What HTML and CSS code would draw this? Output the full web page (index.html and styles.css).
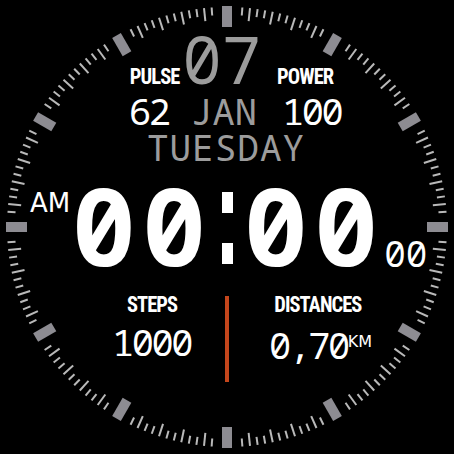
FILE: index.html
```html
<!DOCTYPE html>
<html lang="en">
<head>
<meta charset="utf-8">
<title>Watch face</title>
<link rel="stylesheet" href="styles.css">
</head>
<body>
<div class="watch">
  <svg class="dial" width="454" height="454" viewBox="0 0 454 454" aria-hidden="true">
    <defs>
      <g id="seg">
        <rect class="hour" x="222" y="6" width="10" height="21"/>
        <line class="tick" x1="227" y1="7" x2="227" y2="15" transform="rotate(4 227 227)"/>
        <line class="tick" x1="227" y1="7" x2="227" y2="20" transform="rotate(6 227 227)"/>
        <line class="tick" x1="227" y1="7" x2="227" y2="15" transform="rotate(8 227 227)"/>
        <line class="tick" x1="227" y1="7" x2="227" y2="15" transform="rotate(10 227 227)"/>
        <line class="tick" x1="227" y1="7" x2="227" y2="20" transform="rotate(12 227 227)"/>
        <line class="tick" x1="227" y1="7" x2="227" y2="15" transform="rotate(14 227 227)"/>
        <line class="tick" x1="227" y1="7" x2="227" y2="15" transform="rotate(16 227 227)"/>
        <line class="tick" x1="227" y1="7" x2="227" y2="20" transform="rotate(18 227 227)"/>
        <line class="tick" x1="227" y1="7" x2="227" y2="15" transform="rotate(20 227 227)"/>
        <line class="tick" x1="227" y1="7" x2="227" y2="15" transform="rotate(22 227 227)"/>
        <line class="tick" x1="227" y1="7" x2="227" y2="20" transform="rotate(24 227 227)"/>
        <line class="tick" x1="227" y1="7" x2="227" y2="15" transform="rotate(26 227 227)"/>
      </g>
    </defs>
    <use href="#seg"/>
    <use href="#seg" transform="rotate(30 227 227)"/>
    <use href="#seg" transform="rotate(60 227 227)"/>
    <use href="#seg" transform="rotate(90 227 227)"/>
    <use href="#seg" transform="rotate(120 227 227)"/>
    <use href="#seg" transform="rotate(150 227 227)"/>
    <use href="#seg" transform="rotate(180 227 227)"/>
    <use href="#seg" transform="rotate(210 227 227)"/>
    <use href="#seg" transform="rotate(240 227 227)"/>
    <use href="#seg" transform="rotate(270 227 227)"/>
    <use href="#seg" transform="rotate(300 227 227)"/>
    <use href="#seg" transform="rotate(330 227 227)"/>
  </svg>

  <div class="face">
    <div class="row row-day">
      <span class="label">PULSE</span>
      <span class="day">07</span>
      <span class="label">POWER</span>
    </div>
    <div class="row row-month">
      <span class="value">62</span>
      <span class="month">JAN</span>
      <span class="value">100</span>
    </div>
    <div class="weekday">TUESDAY</div>
    <div class="time">
      <span class="ampm">AM</span>
      <span class="hm hm-first">00</span><span class="colon">:</span><span class="hm">00</span>
      <span class="sec">00</span>
    </div>
    <div class="stats">
      <span class="label stat-l">STEPS</span>
      <span class="divider"></span>
      <span class="label stat-r">DISTANCES</span>
      <span class="value stat-l">1000</span>
      <span class="value stat-r dist">0,70<span class="unit">KM</span></span>
    </div>
  </div>
</div>
</body>
</html>
```
FILE: styles.css
```css
html, body {
  margin: 0;
  padding: 0;
  background: #000;
}

.watch {
  position: relative;
  width: 454px;
  height: 454px;
  overflow: hidden;
  background: #000;
  color: #fff;
  font-family: "Noto Sans Mono", "DejaVu Sans Mono", monospace;
}

.dial {
  position: absolute;
  left: 0;
  top: 0;
}

.hour {
  fill: #8d8c92;
}

.tick {
  stroke: #b9b9b9;
  stroke-width: 2;
}

.face {
  position: relative;
  display: flex;
  flex-direction: column;
  padding-top: 30px;
}

.row {
  display: flex;
  align-items: baseline;
}

.label {
  display: inline-block;
  font-family: "Roboto Condensed", "Roboto", sans-serif;
  font-weight: 700;
  font-size: 22px;
  line-height: 22px;
  letter-spacing: -1px;
  white-space: nowrap;
  transform: scaleX(0.93);
}

.row-day {
  height: 56px;
  line-height: 56px;
  padding-left: 128px;
}

.day {
  font-size: 66px;
  color: #9c9c9c;
  margin: 0 14px 0 1px;
}

.row-month {
  height: 40px;
  line-height: 40px;
  margin-top: 4.6px;
  padding-left: 129px;
}

.value {
  font-size: 37px;
  line-height: 40px;
  letter-spacing: -2.5px;
  white-space: nowrap;
}

.month {
  font-size: 37px;
  color: #9c9c9c;
  margin: 0 25px 0 22px;
}

.weekday {
  text-align: center;
  font-size: 36px;
  line-height: 38px;
  letter-spacing: 1px;
  color: #9c9c9c;
  margin-top: -1.6px;
  padding-right: 2px;
}

.time {
  display: flex;
  align-items: flex-end;
  margin-top: 17.5px;
  height: 80px;
  padding-left: 30px;
}

.ampm {
  align-self: flex-start;
  font-family: "DejaVu Sans", sans-serif;
  font-size: 26px;
  line-height: 26px;
  margin-top: 5.5px;
}

.hm {
  font-weight: 700;
  font-size: 107px;
  line-height: 80px;
  letter-spacing: 6px;
}

.hm-first {
  margin-left: 1.6px;
}

.colon {
  position: relative;
  width: 11px;
  height: 80px;
  margin: 0 10.6px 0 10px;
  color: transparent;
  font-size: 10px;
}

.colon::before,
.colon::after {
  content: "";
  position: absolute;
  left: 0;
  width: 11px;
  height: 21px;
  background: #fff;
}

.colon::before {
  top: 7.5px;
}

.colon::after {
  top: 58.5px;
}

.sec {
  font-size: 36px;
  line-height: 36px;
  margin-bottom: -7.5px;
}

.stats {
  display: grid;
  grid-template-columns: 147px 4px 177px;
  grid-template-rows: 28px 60px;
  margin-top: 29px;
  margin-left: 78px;
}

.stat-l {
  grid-column: 1;
  text-align: center;
}

.stat-r {
  grid-column: 3;
  text-align: center;
}

.stats .label {
  grid-row: 1;
  align-self: start;
}

.stats .label.stat-l,
.stats .label.stat-r {
  justify-self: center;
}

.stats .value {
  grid-row: 2;
  align-self: start;
}

.dist {
  padding-left: 6px;
}

.divider {
  grid-column: 2;
  grid-row: 1 / 3;
  width: 3.5px;
  height: 86px;
  margin-top: 2.5px;
  background: #c4461c;
}

.unit {
  font-family: "DejaVu Sans", sans-serif;
  font-size: 16px;
  letter-spacing: 0;
  vertical-align: 12px;
  margin-left: 0;
}
```
